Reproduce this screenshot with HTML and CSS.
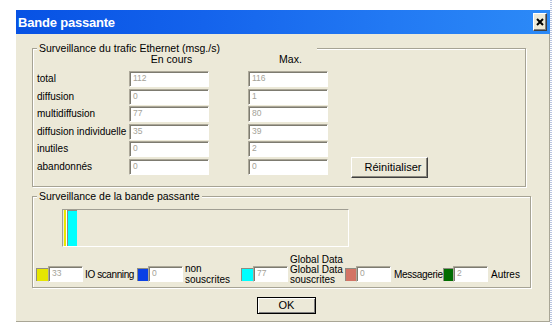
FILE: index.html
```html
<!DOCTYPE html>
<html lang="fr">
<head>
<meta charset="utf-8">
<title>Bande passante</title>
<link rel="stylesheet" href="styles.css">
</head>
<body>
<div class="screen">
  <div class="win">
    <div class="titlebar">
      <span class="title">Bande passante</span>
      <span class="close"><svg width="8" height="8" viewBox="0 0 8 8"><path d="M1 1L7 7M7 1L1 7" stroke="#000" stroke-width="2"/></svg></span>
    </div>
    <div class="body">
      <div class="group g1">
        <span class="legend l1">Surveillance du trafic Ethernet (msg./s)</span>
        <div class="stats">
          <div class="lbl"></div><div class="hdr c2">En cours</div><div class="hdr c3">Max.</div>
          <div class="lbl">total</div><div class="tb c2">112</div><div class="tb c3">116</div>
          <div class="lbl">diffusion</div><div class="tb c2">0</div><div class="tb c3">1</div>
          <div class="lbl">multidiffusion</div><div class="tb c2">77</div><div class="tb c3">80</div>
          <div class="lbl">diffusion individuelle</div><div class="tb c2">35</div><div class="tb c3">39</div>
          <div class="lbl">inutiles</div><div class="tb c2">0</div><div class="tb c3">2</div>
          <div class="lbl">abandonnés</div><div class="tb c2">0</div><div class="tb c3">0</div>
          <div class="btn reset">Réinitialiser</div>
        </div>
      </div>
      <div class="group g2">
        <span class="legend">Surveillance de la bande passante</span>
        <div class="graph">
          <div class="bar bar-y"></div>
          <div class="bar bar-c"></div>
        </div>
        <div class="keys">
          <div class="key k1"><span class="sw sw-y"></span><span class="tb sm">33</span><span class="klbl">IO scanning</span></div>
          <div class="key k2"><span class="sw sw-b"></span><span class="tb sm">0</span><span class="klbl two">non<br>souscrites</span></div>
          <div class="key k3"><span class="sw sw-c"></span><span class="tb sm">77</span><span class="klbl three">Global Data<br>Global Data<br>souscrites</span></div>
          <div class="key k4"><span class="sw sw-r"></span><span class="tb sm">0</span><span class="klbl">Messagerie</span></div>
          <div class="key k5"><span class="sw sw-g"></span><span class="tb sm">2</span><span class="klbl">Autres</span></div>
        </div>
      </div>
      <div class="btn ok">OK</div>
    </div>
  </div>
  <div class="edge"></div>
</div>
</body>
</html>
```

FILE: styles.css
```css
html, body {
  margin: 0;
  padding: 0;
  background: #fff;
}
body {
  font-family: "Liberation Sans", Arial, sans-serif;
  color: #000;
}
.screen {
  display: flex;
  width: 552px;
  height: 325px;
  overflow: hidden;
}
.win {
  margin: 10px 0 0 16px;
  width: 534px;
  height: 312px;
  box-sizing: border-box;
  background: #ece9d8;
  border-right: 1px solid #a9a696;
  border-bottom: 1px solid #a9a696;
  display: flex;
  flex-direction: column;
}
.titlebar {
  height: 24px;
  margin-right: -1px;
  background: linear-gradient(90deg, #0752e4 0%, #1463ec 35%, #2279f3 70%, #2c8af7 100%);
  display: flex;
  align-items: center;
}
.title {
  color: #fff;
  font-weight: bold;
  font-size: 13px;
  letter-spacing: -0.2px;
  margin-left: 2px;
  margin-top: 1px;
}
.close {
  margin-left: auto;
  margin-right: 3px;
  width: 14px;
  height: 18px;
  box-sizing: border-box;
  background: #ece9d8;
  border: 1px solid;
  border-color: #fff #404040 #404040 #fff;
  box-shadow: inset -1px -1px 0 #808080;
  display: flex;
  align-items: center;
  justify-content: center;
}
.close svg { display: block; margin: 0 1px 1px 0; }
.body {
  display: flex;
  flex-direction: column;
  align-items: flex-start;
}
.group {
  position: relative;
  box-sizing: border-box;
  margin-left: 16px;
  border: 1px solid #a6a394;
  box-shadow: inset 1px 1px 0 #fff, 1px 1px 0 #fff;
}
.g1 {
  margin-top: 14px;
  width: 494px;
  height: 139px;
  padding: 2px 0 0 4px;
}
.g2 {
  margin-top: 9px;
  width: 499px;
  height: 92px;
  padding: 12px 0 0 3px;
}
.legend {
  position: absolute;
  top: -7px;
  left: 4px;
  padding: 0 2px;
  background: #ece9d8;
  font-size: 10.5px;
  line-height: 13px;
  white-space: nowrap;
}
.l1 { width: 276px; }
.stats {
  display: grid;
  grid-template-columns: 92px 119px 103px 77px;
  grid-template-rows: 20px repeat(6, 17.6px);
}
.lbl { grid-column: 1; }
.c2 { grid-column: 2; }
.c3 { grid-column: 3; }
.hdr {
  width: 80px;
  padding-left: 5px;
  box-sizing: border-box;
  text-align: center;
  font-size: 10.5px;
  line-height: 17px;
}
.lbl {
  font-size: 10px;
  line-height: 16px;
  white-space: nowrap;
}
.tb {
  width: 80px;
  height: 16px;
  box-sizing: border-box;
  background: #fff;
  border: 1px solid;
  border-color: #aca899 #fff #fff #aca899;
  box-shadow: inset 1px 1px 0 #7d7b70;
  padding: 1px 0 0 3px;
  font-size: 8.5px;
  line-height: 10px;
  color: #a4a297;
  display: block;
}
.btn {
  box-sizing: border-box;
  background: #ece9d8;
  border: 1px solid;
  border-color: #fff #404040 #404040 #fff;
  box-shadow: inset -1px -1px 0 #8a887d;
  font-size: 11px;
  text-align: center;
}
.reset {
  grid-column: 4;
  grid-row: 6 / 8;
  align-self: end;
  width: 77px;
  height: 21px;
  margin-bottom: -1px;
  line-height: 19px;
  padding-left: 7px;
}
.graph {
  margin-left: 26px;
  width: 287px;
  height: 38px;
  box-sizing: border-box;
  border: 1px solid;
  border-color: #a09e93 #fff #fff #a09e93;
  display: flex;
  align-items: stretch;
}
.bar { box-sizing: border-box; }
.bar-y {
  margin-left: 1px;
  width: 3px;
  background: #e8e800;
  border-right: 1px solid #fff;
}
.bar-c {
  width: 10px;
  background: #00ffff;
  border-left: 1px solid #8e8c82;
  border-top: 1px solid #8e8c82;
}
.keys {
  display: grid;
  grid-template-columns: 101px 104px 104px 98px auto;
  margin-top: 19px;
}
.key {
  display: flex;
  align-items: center;
  height: 16px;
}
.sw {
  width: 12px;
  height: 13px;
  box-sizing: border-box;
  border-top: 1px solid #8e8c82;
  border-left: 1px solid #8e8c82;
  margin-top: 1px;
}
.sw-y { background: #e6e600; }
.sw-b { background: #0a40e6; width: 11px; }
.sw-c { background: #00ffff; }
.sw-r { background: #d37465; width: 11px; }
.sw-g { background: #006d00; width: 10px; }
.tb.sm { width: 35px; }
.klbl {
  font-size: 10px;
  line-height: 11px;
  margin-left: 2px;
  white-space: nowrap;
}
.k1 .klbl { letter-spacing: -0.4px; }
.k4 .klbl { letter-spacing: -0.3px; margin-left: 3px; }
.k5 .klbl { margin-left: 3px; }
.two { line-height: 11px; }
.three { line-height: 10px; margin-bottom: 8px; }
.ok {
  margin: 9px 0 0 241px;
  width: 59px;
  height: 17px;
  border: 1px solid #000;
  box-shadow: inset 1px 1px 0 #fff, inset -1px -1px 0 #808080;
  line-height: 15px;
  font-size: 11px;
}
.edge {
  width: 2px;
  height: 325px;
  background: repeating-linear-gradient(180deg, #b8c4e0 0 1px, #fff 1px 2px);
}
```
